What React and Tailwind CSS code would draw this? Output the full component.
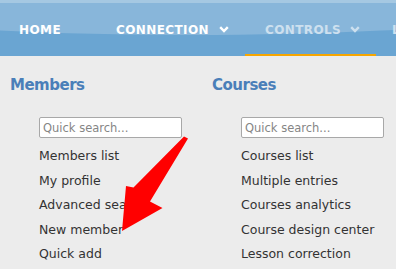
import React from "react";

function Chevron({ className }) {
  return (
    <svg width="10" height="7" viewBox="0 0 10 7" className={"shrink-0 " + (className || "")}>
      <polyline points="1.2,1.2 5,5 8.8,1.2" fill="none" stroke="currentColor" strokeWidth="2.4" strokeLinecap="butt" strokeLinejoin="miter" />
    </svg>
  );
}

function Column({ title, links, className }) {
  return (
    <div className={"flex flex-col shrink-0 " + className}>
      <h2 className="text-[15px] leading-[16px] font-bold tracking-[-0.5px] text-[#4a7fb9]">{title}</h2>
      <div className="ml-[29px] mt-[24px] flex flex-col">
        <input
          type="text"
          placeholder="Quick search..."
          className="w-[143px] h-[21px] bg-white border border-[#a8a8a8] rounded-[2px] pl-[3px] text-[11.5px] text-[#333] placeholder:text-[#858585] outline-none"
        />
        <ul className="mt-[6px] text-[12.5px] leading-[24.5px] text-[#333] whitespace-nowrap">
          {links.map((l) => (
            <li key={l}>{l}</li>
          ))}
        </ul>
      </div>
    </div>
  );
}

export default function App() {
  return (
    <div className="relative w-[396px] h-[269px] overflow-hidden bg-[#ececec] font-['DejaVu_Sans','Liberation_Sans',sans-serif]">
      <header className="relative h-[56px] overflow-hidden bg-[#6aa5d2] border-t-[3px] border-[#a5c8e2]">
        <div className="absolute left-[-310px] top-[-88px] w-[1000px] h-[120px] rounded-[50%] bg-[#88b6da]" />
        <nav className="relative flex h-full items-stretch whitespace-nowrap text-[12px] font-bold tracking-[0.4px]">
          <div className="shrink-0 w-[96px] pl-[19px] flex items-center text-white">HOME</div>
          <div className="shrink-0 w-[149px] pl-[20px] flex items-center gap-[10px] text-white">
            <span>CONNECTION</span>
            <Chevron />
          </div>
          <div className="shrink-0 relative w-[131px] pl-[20px] flex items-center gap-[9px] text-[#cde0ef]">
            <span>CONTROLS</span>
            <Chevron />
            <div className="absolute left-0 right-0 bottom-0 h-[2.5px] bg-[#f7a600]" />
          </div>
          <div className="shrink-0 pl-[16px] flex items-center text-[#cde0ef]">LESSONS</div>
        </nav>
      </header>
      <main className="flex pt-[21px] pl-[10px]">
        <Column
          title="Members"
          className="w-[202px]"
          links={["Members list", "My profile", "Advanced search", "New member", "Quick add"]}
        />
        <Column
          title="Courses"
          className="w-[184px]"
          links={["Courses list", "Multiple entries", "Courses analytics", "Course design center", "Lesson correction"]}
        />
      </main>
      <svg className="absolute left-0 top-0 pointer-events-none" width="396" height="269" viewBox="0 0 396 269">
        <polygon
          points="184,136.5 188,138.5 150,201.5 162.5,208 122,231 126,186 133.5,187.5"
          fill="#ff0000"
        />
      </svg>
    </div>
  );
}
